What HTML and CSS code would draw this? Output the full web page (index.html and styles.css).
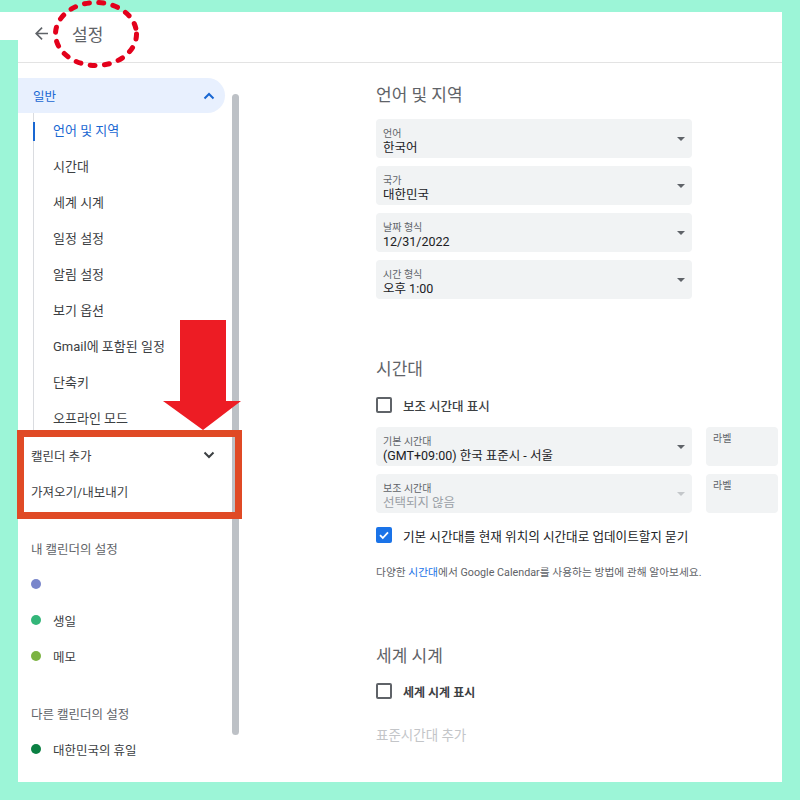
FILE: index.html
```html
<!DOCTYPE html>
<html>
    <head>
        <meta charset="UTF-8">
        <link rel="stylesheet" href="styles.css">
    </head>
    <body>
        <div class="screen">
            <header class="topbar">
                <svg class="back" viewBox="4 4 16 16" width="13" height="13">
                    <path d="M20 11H7.83l5.59-5.59L12 4l-8 8 8 8 1.41-1.41L7.83 13H20v-2z" fill="#5f6368"/>
                </svg>
                <span class="title">설정</span>
            </header>

            <div class="content">
                <aside class="sidebar">
                    <nav class="nav">
                        <div class="nav-group-head active">
                            <span>일반</span>
                            <svg width="12" height="8" viewBox="0 0 12 8"><path d="M1.5 6.5 6 2l4.5 4.5" fill="none" stroke="#1967d2" stroke-width="2"/></svg>
                        </div>
                        <div class="sublist">
                            <div class="subitem current">언어 및 지역</div>
                            <div class="subitem">시간대</div>
                            <div class="subitem">세계 시계</div>
                            <div class="subitem">일정 설정</div>
                            <div class="subitem">알림 설정</div>
                            <div class="subitem">보기 옵션</div>
                            <div class="subitem">Gmail에 포함된 일정</div>
                            <div class="subitem">단축키</div>
                            <div class="subitem">오프라인 모드</div>
                        </div>
                        <div class="nav-group-head">
                            <span>캘린더 추가</span>
                            <svg width="12" height="8" viewBox="0 0 12 8"><path d="M1.5 1.5 6 6l4.5-4.5" fill="none" stroke="#3c4043" stroke-width="2"/></svg>
                        </div>
                        <div class="nav-row">가져오기/내보내기</div>

                        <div class="nav-section">
                            <div class="nav-row muted">내 캘린더의 설정</div>
                            <div class="nav-row"><i class="dot" style="background:#7986cb"></i></div>
                            <div class="nav-row"><i class="dot" style="background:#33b679"></i>생일</div>
                            <div class="nav-row"><i class="dot" style="background:#7cb342"></i>메모</div>
                        </div>
                        <div class="nav-section">
                            <div class="nav-row muted">다른 캘린더의 설정</div>
                            <div class="nav-row"><i class="dot" style="background:#0b8043"></i>대한민국의 휴일</div>
                        </div>
                    </nav>
                    <div class="scrollbar"></div>
                </aside>

                <main class="main">
                    <section class="section">
                        <h2>언어 및 지역</h2>
                        <div class="fields">
                            <div class="select">
                                <div><div class="label">언어</div><div class="value">한국어</div></div>
                                <i class="caret"></i>
                            </div>
                            <div class="select">
                                <div><div class="label">국가</div><div class="value">대한민국</div></div>
                                <i class="caret"></i>
                            </div>
                            <div class="select">
                                <div><div class="label">날짜 형식</div><div class="value">12/31/2022</div></div>
                                <i class="caret"></i>
                            </div>
                            <div class="select">
                                <div><div class="label">시간 형식</div><div class="value">오후 1:00</div></div>
                                <i class="caret"></i>
                            </div>
                        </div>
                    </section>

                    <section class="section tz">
                        <h2>시간대</h2>
                        <label class="check"><i class="box"></i>보조 시간대 표시</label>
                        <div class="fields">
                            <div class="tz-row">
                                <div class="select">
                                    <div><div class="label">기본 시간대</div><div class="value">(GMT+09:00) 한국 표준시 - 서울</div></div>
                                    <i class="caret"></i>
                                </div>
                                <div class="tag">라벨</div>
                            </div>
                            <div class="tz-row">
                                <div class="select disabled">
                                    <div><div class="label">보조 시간대</div><div class="value">선택되지 않음</div></div>
                                    <i class="caret"></i>
                                </div>
                                <div class="tag">라벨</div>
                            </div>
                        </div>
                        <label class="check ask">
                            <i class="box on"><svg width="12" height="12" viewBox="0 0 12 12"><path d="M2 6.2 4.8 9 10 3.4" fill="none" stroke="#fff" stroke-width="1.8"/></svg></i>
                            기본 시간대를 현재 위치의 시간대로 업데이트할지 묻기
                        </label>
                        <p class="help">다양한 <span class="link">시간대</span>에서 Google Calendar를 사용하는 방법에 관해 알아보세요.</p>
                    </section>

                    <section class="section world">
                        <h2>세계 시계</h2>
                        <label class="check small"><i class="box"></i>세계 시계 표시</label>
                        <p class="add-zone">표준시간대 추가</p>
                    </section>
                </main>
            </div>

            <!-- annotations drawn over the screenshot -->
            <svg class="mark-circle" width="94" height="72" viewBox="0 0 94 72">
                <ellipse cx="46" cy="34" rx="40.5" ry="31.5" fill="none" stroke="#e3001b" stroke-width="5" stroke-dasharray="5 9.4" stroke-linecap="round"/>
            </svg>
            <svg class="mark-arrow" width="80" height="110" viewBox="0 0 80 110">
                <polygon points="17,0 63,0 63,81 78,81 40,110 0,81 17,81" fill="#ed1c24"/>
            </svg>
            <div class="mark-box"></div>
        </div>
    </body>
</html>
```

FILE: styles.css
```css
body {
    margin: 0;
    background-color: #9cf5d7;
    font-family: Roboto, "Noto Sans CJK KR", sans-serif;
    color: #3c4043;
}

.screen {
    position: relative;
    margin: 12px 18px 0 0;
    height: 770px;
    background: white;
    display: flex;
    flex-direction: column;
}

/* mint strip on the left of the cropped screenshot */
.screen::before {
    content: "";
    position: absolute;
    left: 0;
    top: 28px;
    bottom: 0;
    width: 18px;
    background-color: #9cf5d7;
}

.topbar {
    height: 42px;
    padding: 0 0 8px 35px;
    border-bottom: 1px solid #e3e3e3;
    display: flex;
    align-items: center;
}

.title {
    margin-left: 24px;
    font-size: 17px;
    color: #5f6368;
}

.content {
    flex: 1;
    display: flex;
    padding-left: 18px;
    min-height: 0;
}

/* sidebar */
.sidebar {
    width: 227px;
    display: flex;
    flex-shrink: 0;
}

.nav {
    width: 214px;
    padding-top: 15px;
    font-size: 12.5px;
}

.nav-group-head {
    width: 207px;
    height: 36px;
    box-sizing: border-box;
    padding: 0 10px 0 13px;
    display: flex;
    align-items: center;
    justify-content: space-between;
}

.nav-group-head.active {
    height: 35px;
    padding-left: 15px;
    background-color: #e8f0fe;
    color: #1967d2;
    border-radius: 0 18px 18px 0;
}

.sublist {
    margin-left: 15px;
    border-left: 1px solid #dadce0;
}

.subitem {
    position: relative;
    height: 36px;
    line-height: 36px;
    padding-left: 19px;
    font-size: 13px;
}

.subitem.current {
    color: #1967d2;
}

.subitem.current::before {
    content: "";
    position: absolute;
    left: -1px;
    top: 9px;
    width: 2px;
    height: 19px;
    background-color: #1967d2;
}

.nav-row {
    height: 36px;
    padding-left: 13px;
    display: flex;
    align-items: center;
}

.nav-row.muted {
    color: #5f6368;
}

.nav-section {
    margin-top: 21px;
}

.dot {
    width: 10px;
    height: 10px;
    border-radius: 50%;
    margin-right: 12px;
}

.scrollbar {
    width: 7px;
    height: 641px;
    margin-top: 31px;
    border-radius: 4px;
    background-color: #bdc1c6;
}

/* main settings panel */
.main {
    flex: 1;
    padding: 20px 0 0 131px;
}

.section h2 {
    margin: 0;
    font-size: 17px;
    line-height: 24px;
    font-weight: normal;
    color: #5f6368;
}

.fields {
    margin-top: 12px;
    display: flex;
    flex-direction: column;
    gap: 8px;
}

.select {
    width: 316px;
    height: 39px;
    box-sizing: border-box;
    padding: 8px 7px 0 7px;
    border-radius: 4px;
    background-color: #f1f3f4;
    display: flex;
    justify-content: space-between;
}

.label {
    font-size: 10px;
    line-height: 13px;
    color: #5f6368;
}

.value {
    font-size: 12.5px;
    line-height: 16px;
    color: #202124;
}

.caret {
    align-self: center;
    margin-top: -8px;
    border-left: 4px solid transparent;
    border-right: 4px solid transparent;
    border-top: 4px solid #5f6368;
}

.select.disabled .value {
    color: #9aa0a6;
}

.select.disabled .caret {
    border-top-color: #c4c7ca;
}

.tz {
    margin-top: 58px;
}

.tz .fields {
    margin-top: 10px;
}

.tz-row {
    display: flex;
    gap: 14px;
}

.tag {
    width: 72px;
    height: 39px;
    box-sizing: border-box;
    padding: 5px 7px;
    border-radius: 4px;
    background-color: #f1f3f4;
    font-size: 10px;
    line-height: 13px;
    color: #5f6368;
}

.check {
    margin-top: 12px;
    height: 24px;
    display: flex;
    align-items: center;
    gap: 11px;
    font-size: 12.5px;
    font-weight: 500;
    color: #3c4043;
}

.check.ask {
    margin-top: 10px;
    font-size: 12.6px;
    font-weight: normal;
    color: #202124;
}

.check.small {
    margin-top: 11px;
    font-size: 12px;
    font-weight: bold;
}

.box {
    width: 16px;
    height: 16px;
    box-sizing: border-box;
    border: 2px solid #5f6368;
    border-radius: 2px;
    display: flex;
    align-items: center;
    justify-content: center;
}

.box.on {
    border-color: #1a73e8;
    background-color: #1a73e8;
}

.help {
    margin: 18px 0 0;
    font-size: 10.75px;
    line-height: 16px;
    color: #5f6368;
}

.link {
    color: #1a73e8;
}

.world {
    margin-top: 63px;
}

.add-zone {
    margin: 24px 0 0;
    font-size: 13.5px;
    line-height: 16px;
    color: #c3c5c8;
}

/* red annotations */
.mark-circle {
    position: absolute;
    left: 50px;
    top: -12px;
}

.mark-arrow {
    position: absolute;
    left: 163px;
    top: 308px;
}

.mark-box {
    position: absolute;
    left: 17px;
    top: 418px;
    width: 211px;
    height: 75px;
    border: 7px solid #e04a25;
}
```
